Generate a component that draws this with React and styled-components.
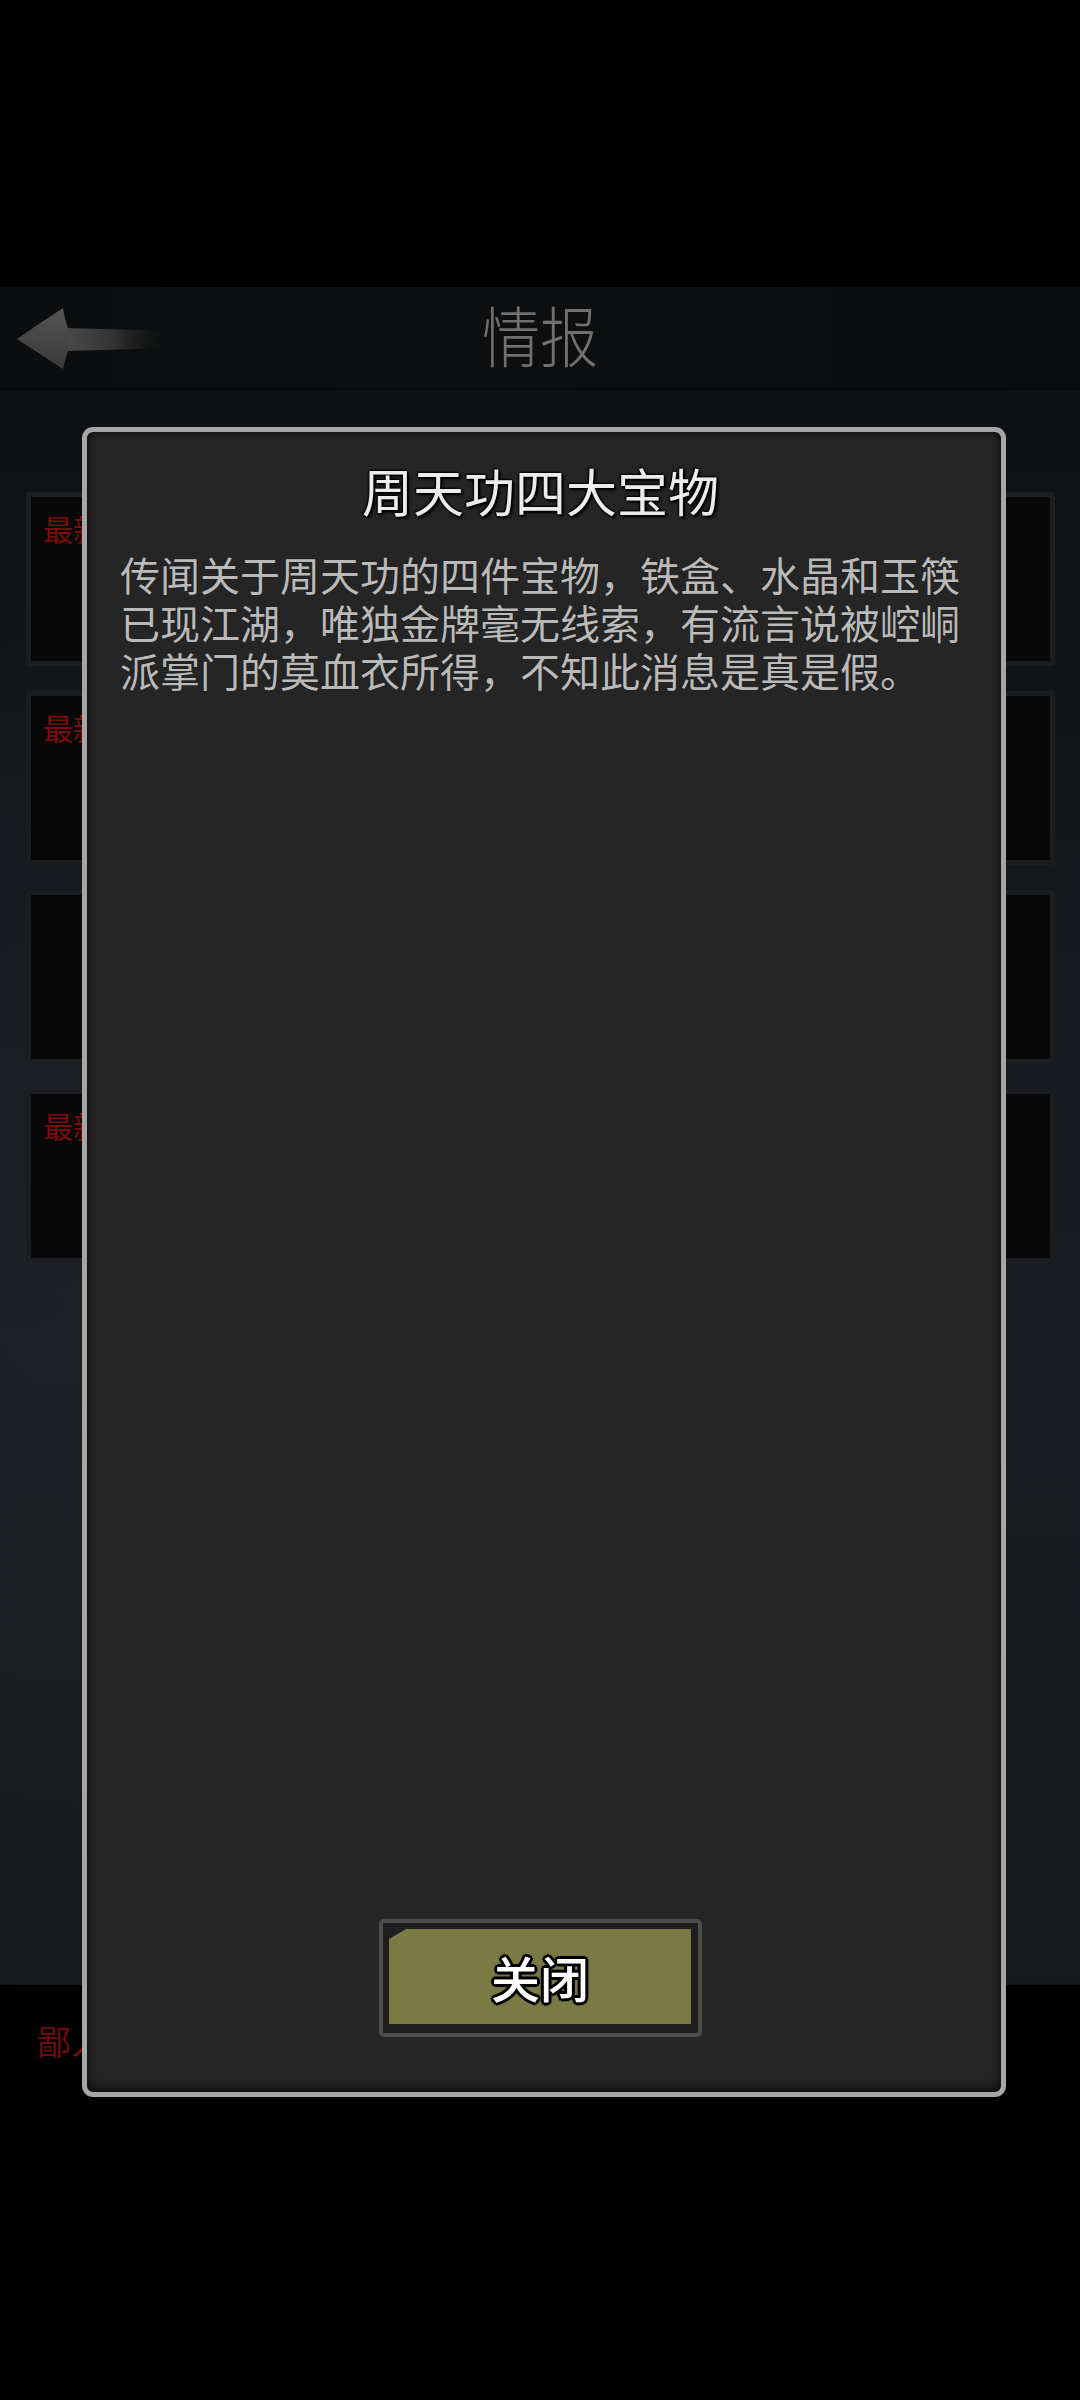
import React from "react";
import styled, { createGlobalStyle } from "styled-components";

const Global = createGlobalStyle`
  html, body { margin: 0; padding: 0; background: #000; }
  body { font-family: "Noto Sans CJK SC", "Noto Sans", sans-serif; }
  * { box-sizing: border-box; }
`;

const Page = styled.div`
  position: relative;
  width: 1080px;
  height: 2400px;
  display: flex;
  flex-direction: column;
  background: #000;
  overflow: hidden;
`;

const TopSpace = styled.div`
  height: 287px;
  background: #000;
  flex: none;
`;

const Header = styled.header`
  height: 103px;
  flex: none;
  display: grid;
  grid-template-columns: 1fr auto 1fr;
  align-items: center;
  padding: 0 16px;
  background: linear-gradient(90deg, #0c0d0e 0%, #0e0f10 40%, #0d0e0f 70%, #0b0c0d 100%);
  border-bottom: 2px solid #08090a;
`;

const BackButton = styled.button`
  justify-self: start;
  width: 160px;
  height: 64px;
  padding: 0;
  border: none;
  background: transparent;
  display: flex;
  align-items: center;
`;

const HeaderTitle = styled.h1`
  margin: -10px 0 0;
  font-family: "Noto Sans CJK SC", sans-serif;
  font-weight: 300;
  font-size: 66px;
  line-height: 1;
  color: #707070;
  letter-spacing: 0;
  transform: scaleX(0.88);
`;

const Content = styled.main`
  flex: none;
  height: 1595px;
  padding: 102px 25px 0 26px;
  display: flex;
  flex-direction: column;
  gap: 25px;
  background:
    radial-gradient(ellipse at 15% 55%, rgba(40, 46, 52, 0.35), transparent 60%),
    linear-gradient(180deg, #0e1013 0%, #15181c 35%, #1a1d21 60%, #16191c 100%);
`;

const Card = styled.div`
  height: 174px;
  border: 5px solid #1b1d1f;
  border-radius: 3px;
  background: #080808;
  padding: 13px 12px;
`;

const CardLabel = styled.div`
  font-size: 30px;
  line-height: 36px;
  color: #7a0c0c;
`;

const Footer = styled.footer`
  flex: 1;
  background: #000;
  padding: 36px 0 0 37px;
`;

const FooterLabel = styled.div`
  font-size: 34px;
  line-height: 40px;
  color: #6e0a0a;
`;

const Overlay = styled.div`
  position: absolute;
  inset: 0;
  display: flex;
  justify-content: center;
  align-items: flex-start;
  padding-top: 427px;
  padding-left: 8px;
`;

const Dialog = styled.section`
  width: 924px;
  height: 1670px;
  border: 5px solid #a6a6a6;
  border-radius: 11px;
  background: #252525;
  box-shadow: inset 0 0 8px rgba(0, 0, 0, 0.75), inset 0 -6px 10px rgba(0, 0, 0, 0.35);
  display: flex;
  flex-direction: column;
  align-items: center;
  padding: 28px 40px 55px 33px;
`;

const DialogTitle = styled.h2`
  margin: 0;
  font-size: 51px;
  line-height: 60px;
  font-weight: 400;
  color: #ececec;
  text-shadow: 0 0 2px #000, 1px 1px 2px #000, -1px -1px 2px #000, 2px 2px 3px #000;
`;

const Body = styled.p`
  margin: 30px 0 0;
  align-self: stretch;
  flex: 1;
  font-size: 40px;
  line-height: 48px;
  color: #bababa;
  text-shadow: 0 0 1px rgba(0, 0, 0, 0.6);
`;

const ButtonFrame = styled.div`
  width: 323px;
  height: 118px;
  border: 4px solid #4c4c4c;
  border-radius: 5px;
  background: #1e1e1e;
  padding: 6px 7px 9px 6px;
  flex: none;
`;

const CloseButton = styled.button`
  width: 100%;
  height: 100%;
  border: none;
  padding: 0;
  background: #7b7a45;
  clip-path: polygon(17px 0, 100% 0, 100% 100%, 0 100%, 0 10px);
  display: flex;
  align-items: center;
  justify-content: center;
  font-family: "Noto Sans CJK SC", sans-serif;
  font-size: 49px;
  font-weight: 500;
  line-height: 1;
  color: #fff;
  text-shadow:
    3px 0 0 #000, -3px 0 0 #000, 0 3px 0 #000, 0 -3px 0 #000,
    2px 2px 0 #000, -2px -2px 0 #000, 2px -2px 0 #000, -2px 2px 0 #000,
    0 0 4px #000;
`;

function BackArrow() {
  return (
    <svg width="160" height="64" viewBox="0 0 160 64">
      <defs>
        <linearGradient id="shaft" x1="0" x2="1" y1="0" y2="0">
          <stop offset="0" stopColor="#4a4a4a" />
          <stop offset="0.45" stopColor="#333" />
          <stop offset="1" stopColor="#101112" stopOpacity="0" />
        </linearGradient>
        <linearGradient id="head" x1="0" x2="0" y1="0" y2="1">
          <stop offset="0" stopColor="#555" />
          <stop offset="0.5" stopColor="#464646" />
          <stop offset="1" stopColor="#3a3a3a" />
        </linearGradient>
      </defs>
      <path d="M50 22 L156 25 L156 42 L50 45 Z" fill="url(#shaft)" />
      <path d="M1 33 Q24 17 47 2 Q49 14 52 22 L52 45 Q49 53 47 63 Q24 48 1 33 Z" fill="url(#head)" />
    </svg>
  );
}

const cards = [
  { id: 1, label: "最新消息" },
  { id: 2, label: "最新消息" },
  { id: 3, label: "" },
  { id: 4, label: "最新消息" },
];

export default function App() {
  return (
    <>
      <Global />
      <Page>
        <TopSpace />
        <Header>
          <BackButton aria-label="返回">
            <BackArrow />
          </BackButton>
          <HeaderTitle>情报</HeaderTitle>
          <span />
        </Header>
        <Content>
          {cards.map((c) => (
            <Card key={c.id}>{c.label && <CardLabel>{c.label}</CardLabel>}</Card>
          ))}
        </Content>
        <Footer>
          <FooterLabel>鄙人</FooterLabel>
        </Footer>
        <Overlay>
          <Dialog>
            <DialogTitle>周天功四大宝物</DialogTitle>
            <Body>
              传闻关于周天功的四件宝物，铁盒、水晶和玉筷已现江湖，唯独金牌毫无线索，有流言说被崆峒派掌门的莫血衣所得，不知此消息是真是假。
            </Body>
            <ButtonFrame>
              <CloseButton>关闭</CloseButton>
            </ButtonFrame>
          </Dialog>
        </Overlay>
      </Page>
    </>
  );
}
